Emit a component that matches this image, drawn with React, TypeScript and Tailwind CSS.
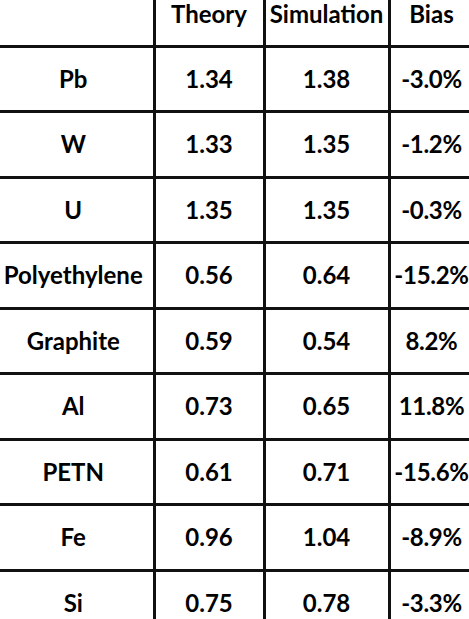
import React from 'react';

const rows = [
  { name: 'Pb', theory: '1.34', sim: '1.38', bias: '-3.0%' },
  { name: 'W', theory: '1.33', sim: '1.35', bias: '-1.2%' },
  { name: 'U', theory: '1.35', sim: '1.35', bias: '-0.3%' },
  { name: 'Polyethylene', theory: '0.56', sim: '0.64', bias: '-15.2%' },
  { name: 'Graphite', theory: '0.59', sim: '0.54', bias: '8.2%' },
  { name: 'Al', theory: '0.73', sim: '0.65', bias: '11.8%' },
  { name: 'PETN', theory: '0.61', sim: '0.71', bias: '-15.6%' },
  { name: 'Fe', theory: '0.96', sim: '1.04', bias: '-8.9%' },
  { name: 'Si', theory: '0.75', sim: '0.78', bias: '-3.3%' },
];

const cols = 'grid grid-cols-[152.5px_110px_125px_85px]';

const App: React.FC = () => {
  return (
    <div className="w-[469px] h-[619px] overflow-hidden bg-white font-['Lato','Open_Sans',sans-serif] font-bold text-[24px] text-black">
      <div className="w-[472.5px]">
        {/* header */}
        <div className={`${cols} h-[47.5px] border-b-[3px] border-[#111]`}>
          <div />
          <div className="border-l-[3px] border-[#111] flex justify-center items-start -mt-[1px] leading-[29px]">Theory</div>
          <div className="border-l-[3px] border-[#111] flex justify-center items-start -mt-[1px] leading-[29px]">Simulation</div>
          <div className="border-l-[3px] border-[#111] flex justify-center items-start -mt-[1px] leading-[29px]">Bias</div>
        </div>

        {rows.map((r) => (
          <div key={r.name} className={`${cols} h-[65.5px] border-b-[3px] border-[#111]`}>
            <div className="flex items-center justify-center pr-[6px] whitespace-nowrap">{r.name}</div>
            <div className="border-l-[3px] border-[#111] flex items-center justify-center">{r.theory}</div>
            <div className="border-l-[3px] border-[#111] flex items-center justify-center">{r.sim}</div>
            <div className="border-l-[3px] border-[#111] flex items-center justify-center tracking-[-0.3px] whitespace-nowrap">{r.bias}</div>
          </div>
        ))}
      </div>
    </div>
  );
};

export default App;
